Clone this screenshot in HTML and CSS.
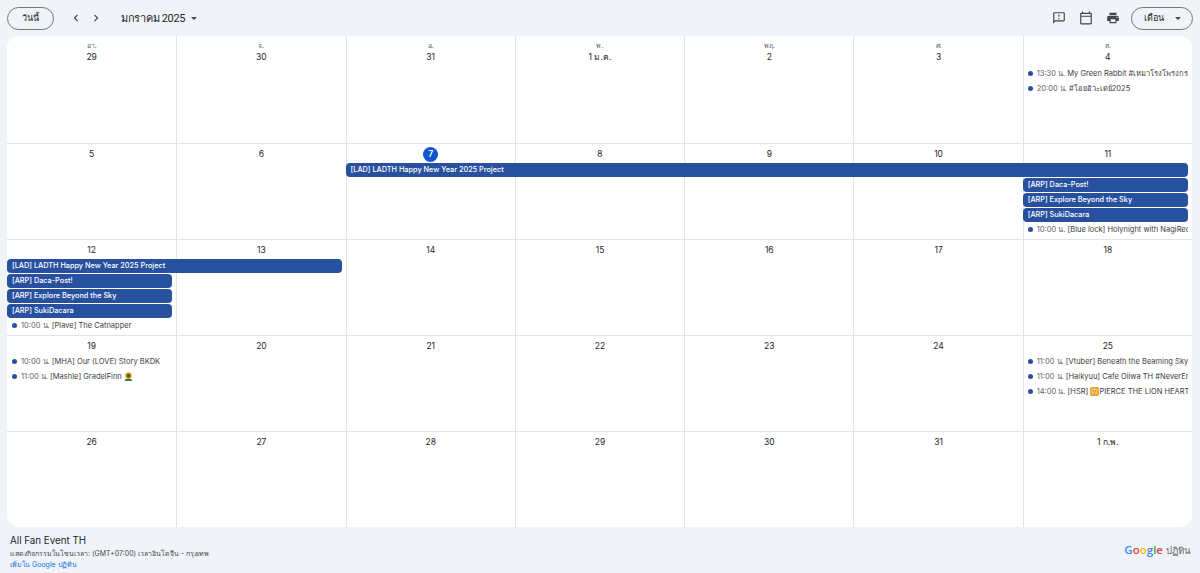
FILE: index.html
```html
<!DOCTYPE html>
<html lang="th">

<head>
    <meta charset="UTF-8">
    <meta name="viewport" content="width=device-width, initial-scale=1.0">
    <title>All Fan Event TH</title>
    <link rel="stylesheet" href="styles.css">
</head>

<body>
    <div class="toolbar">
        <button class="pill today">วันนี้</button>
        <div class="nav">
            <svg class="icon" viewBox="0 0 24 24"><path d="M15.41 7.41 14 6l-6 6 6 6 1.41-1.41L10.83 12z"/></svg>
            <svg class="icon" viewBox="0 0 24 24"><path d="M8.59 16.59 10 18l6-6-6-6-1.41 1.41L13.17 12z"/></svg>
        </div>
        <div class="title">มกราคม 2025</div>
        <span class="caret"></span>
        <div class="actions">
            <svg class="tool" viewBox="0 0 24 24"><path d="M20 2H4c-1.1 0-1.99.9-1.99 2L2 22l4-4h14c1.1 0 2-.9 2-2V4c0-1.1-.9-2-2-2zm0 14H5.17L4 17.17V4h16v12zm-9-4h2v2h-2zm0-6h2v4h-2z"/></svg>
            <svg class="tool" viewBox="0 0 24 24"><path d="M20 3h-1V1h-2v2H7V1H5v2H4c-1.1 0-2 .9-2 2v16c0 1.1.9 2 2 2h16c1.1 0 2-.9 2-2V5c0-1.1-.9-2-2-2zm0 18H4V10h16v11zm0-13H4V5h16v3z"/></svg>
            <svg class="tool" viewBox="0 0 24 24"><path d="M19 8H5c-1.66 0-3 1.34-3 3v6h4v4h12v-4h4v-6c0-1.66-1.34-3-3-3zm-3 11H8v-5h8v5zm3-7c-.55 0-1-.45-1-1s.45-1 1-1 1 .45 1 1-.45 1-1 1zm-1-9H6v4h12V3z"/></svg>
            <button class="pill month">เดือน<span class="caret"></span></button>
        </div>
    </div>

    <div class="calendar">
        <!-- week 1 -->
        <div class="week first">
            <div class="day"><small>อา.</small>29</div>
            <div class="day"><small>จ.</small>30</div>
            <div class="day"><small>อ.</small>31</div>
            <div class="day"><small>พ.</small>1 ม.ค.</div>
            <div class="day"><small>พฤ.</small>2</div>
            <div class="day"><small>ศ.</small>3</div>
            <div class="day"><small>ส.</small>4</div>
            <div class="timed c7 r1"><i></i><b>13:30 น.</b> My Green Rabbit #เหมาโรงโพรงกระต่าย</div>
            <div class="timed c7 r2"><i></i><b>20:00 น.</b> #โอยอิวะเดย์2025</div>
        </div>
        <!-- week 2 -->
        <div class="week">
            <div class="day">5</div>
            <div class="day">6</div>
            <div class="day"><span class="now">7</span></div>
            <div class="day">8</div>
            <div class="day">9</div>
            <div class="day">10</div>
            <div class="day">11</div>
            <div class="bar c3 to8 r1">[LAD] LADTH Happy New Year 2025 Project</div>
            <div class="bar c7 r2">[ARP] Daca-Post!</div>
            <div class="bar c7 r3">[ARP] Explore Beyond the Sky</div>
            <div class="bar c7 r4">[ARP] SukiDacara</div>
            <div class="timed c7 r5"><i></i><b>10:00 น.</b> [Blue lock] Holynight with NagiReo</div>
        </div>
        <!-- week 3 -->
        <div class="week">
            <div class="day">12</div>
            <div class="day">13</div>
            <div class="day">14</div>
            <div class="day">15</div>
            <div class="day">16</div>
            <div class="day">17</div>
            <div class="day">18</div>
            <div class="bar c1 to3 r1">[LAD] LADTH Happy New Year 2025 Project</div>
            <div class="bar c1 r2">[ARP] Daca-Post!</div>
            <div class="bar c1 r3">[ARP] Explore Beyond the Sky</div>
            <div class="bar c1 r4">[ARP] SukiDacara</div>
            <div class="timed c1 r5"><i></i><b>10:00 น.</b> [Plave] The Catnapper</div>
        </div>
        <!-- week 4 -->
        <div class="week">
            <div class="day">19</div>
            <div class="day">20</div>
            <div class="day">21</div>
            <div class="day">22</div>
            <div class="day">23</div>
            <div class="day">24</div>
            <div class="day">25</div>
            <div class="timed c1 r1"><i></i><b>10:00 น.</b> [MHA] Our (LOVE) Story BKDK</div>
            <div class="timed c1 r2"><i></i><b>11:00 น.</b> [Mashle] GradelFinn
                <svg class="emoji" viewBox="0 0 12 12"><path fill="#3f7d3a" d="M1 12c0-2 1-3 5-3s5 1 5 3z"/><circle cx="6" cy="5" r="4.2" fill="#c99a1e"/><circle cx="6" cy="5" r="2.2" fill="#6b4a1c"/></svg>
            </div>
            <div class="timed c7 r1"><i></i><b>11:00 น.</b> [Vtuber] Beneath the Beaming Sky</div>
            <div class="timed c7 r2"><i></i><b>11:00 น.</b> [Haikyuu] Cafe Oiiwa TH #NeverEnding</div>
            <div class="timed c7 r3"><i></i><b>14:00 น.</b> [HSR]
                <svg class="emoji" viewBox="0 0 12 12"><rect width="12" height="12" rx="2" fill="#f2a23a"/><circle cx="6" cy="6" r="4" fill="#f8d26a"/><path fill="#6b3c12" d="M3.6 4.6h1.3v1.3H3.6zm3.5 0h1.3v1.3H7.100zM5 7.700h2v1H5z"/></svg>PIERCE THE LION HEART
            </div>
        </div>
        <!-- week 5 -->
        <div class="week">
            <div class="day">26</div>
            <div class="day">27</div>
            <div class="day">28</div>
            <div class="day">29</div>
            <div class="day">30</div>
            <div class="day">31</div>
            <div class="day">1 ก.พ.</div>
        </div>
    </div>

    <div class="footer">
        <div>
            <div class="cal-name">All Fan Event TH</div>
            <div class="zone">แสดงกิจกรรมในโซนเวลา: (GMT+07:00) เวลาอินโดจีน - กรุงเทพ</div>
            <a class="add" href="#">เพิ่มใน Google ปฏิทิน</a>
        </div>
        <div class="brand">
            <span class="logo"><span class="g-blue">G</span><span class="g-red">o</span><span class="g-yellow">o</span><span class="g-blue">g</span><span class="g-green">l</span><span class="g-red">e</span></span>
            <span class="brand-text">ปฏิทิน</span>
        </div>
    </div>
</body>
</html>
```

FILE: styles.css
```css
* {
    box-sizing: border-box;
}

body {
    margin: 0;
    height: 573px;
    overflow: hidden;
    background-color: #f0f4f9;
    color: #1f1f1f;
    font-family: Inter, "Noto Sans", "Noto Sans CJK SC", sans-serif;
    display: flex;
    flex-direction: column;
    padding: 0 8px 0 7px;
}

/* top bar */
.toolbar {
    height: 36px;
    margin-right: -1px;
    display: flex;
    align-items: center;
    flex-shrink: 0;
}

.pill {
    height: 23px;
    border: 1px solid #747775;
    border-radius: 12px;
    background: transparent;
    color: #1f1f1f;
    font-family: inherit;
    font-size: 9px;
    font-weight: 500;
    padding: 0;
}

.today {
    width: 47px;
}

.nav {
    display: flex;
    gap: 6px;
    margin-left: 15px;
    margin-right: 18px;
}

.icon {
    width: 14px;
    height: 14px;
    fill: #444746;
}

.title {
    font-family: Roboto, "Noto Sans", sans-serif;
    font-size: 11px;
    letter-spacing: -0.3px;
    color: #1f1f1f;
}

.caret {
    display: inline-block;
    width: 0;
    height: 0;
    margin-left: 6px;
    border-left: 3px solid transparent;
    border-right: 3px solid transparent;
    border-top: 3px solid #444746;
}

.actions {
    margin-left: auto;
    display: flex;
    align-items: center;
    gap: 13px;
}

.tool {
    width: 14px;
    height: 14px;
    fill: #444746;
}

.month {
    width: 62px;
    margin-left: -2px;
}

.month .caret {
    margin-left: 11px;
    vertical-align: middle;
}

/* month grid */
.calendar {
    flex: 1;
    min-height: 0;
    background-color: #fff;
    border-radius: 12px;
    overflow: hidden;
    display: flex;
    flex-direction: column;
}

.week {
    height: 96px;
    display: grid;
    grid-template-columns: repeat(7, minmax(0, 1fr));
    grid-template-rows: 19px repeat(5, 15px) 1fr;
    border-top: 1px solid #e1e3e6;
    font-size: 7.5px;
}

.week.first {
    height: 107px;
    grid-template-rows: 31px repeat(5, 15px) 1fr;
    border-top: 0;
}

.day {
    grid-row: 1 / -1;
    border-left: 1px solid #e1e3e6;
    text-align: center;
    padding-top: 4px;
    font-size: 8.5px;
    line-height: 12px;
    font-weight: 400;
    color: #1f1f1f;
}

.day:nth-child(1) {
    border-left: 0;
}

.day:nth-child(1) { grid-column: 1; }
.day:nth-child(2) { grid-column: 2; }
.day:nth-child(3) { grid-column: 3; }
.day:nth-child(4) { grid-column: 4; }
.day:nth-child(5) { grid-column: 5; }
.day:nth-child(6) { grid-column: 6; }
.day:nth-child(7) { grid-column: 7; }

.day small {
    display: block;
    font-size: 7px;
    font-weight: 400;
    line-height: 11px;
    color: #5f6368;
}

.now {
    display: inline-block;
    width: 15px;
    height: 15px;
    margin-top: -2px;
    line-height: 15px;
    border-radius: 50%;
    background-color: #0b57d0;
    color: #fff;
    font-weight: 600;
}

.c1 { grid-column-start: 1; }
.c3 { grid-column-start: 3; }
.c7 { grid-column-start: 7; }
.to3 { grid-column-end: 3; }
.to8 { grid-column-end: 8; }
.r1 { grid-row: 2; }
.r2 { grid-row: 3; }
.r3 { grid-row: 4; }
.r4 { grid-row: 5; }
.r5 { grid-row: 6; }

.bar {
    height: 14px;
    margin: 0 4px 0 0;
    padding-left: 5px;
    font-size: 7.3px;
    line-height: 14px;
    border-radius: 4px;
    background-color: #27509f;
    color: #fff;
    font-weight: 500;
    white-space: nowrap;
    overflow: hidden;
}

.timed {
    height: 14px;
    min-width: 0;
    margin: 0 4px 0 5px;
    line-height: 14px;
    color: #3c4043;
    white-space: nowrap;
    overflow: hidden;
}

.timed i {
    display: inline-block;
    width: 5px;
    height: 5px;
    margin-right: 4px;
    border-radius: 50%;
    background-color: #27509f;
    vertical-align: 0;
}

.timed b {
    font-weight: 400;
    color: #5f6368;
}

.emoji {
    width: 9px;
    height: 9px;
    vertical-align: -2px;
}

/* footer */
.footer {
    height: 46px;
    flex-shrink: 0;
    display: flex;
    justify-content: space-between;
    padding: 7px 2px 0 3px;
}

.cal-name {
    font-size: 9.8px;
    line-height: 14px;
}

.zone {
    font-size: 7px;
    line-height: 11px;
    color: #444746;
}

.add {
    display: block;
    font-size: 7px;
    line-height: 11px;
    color: #1a6fd8;
    text-decoration: none;
}

.brand {
    display: flex;
    align-items: baseline;
    gap: 3px;
    padding-top: 8px;
}

.logo {
    font-family: "Open Sans", sans-serif;
    font-size: 11.5px;
    font-weight: 600;
}

.brand-text {
    font-size: 9.5px;
    color: #5f6368;
}

.g-blue { color: #4285f4; }
.g-red { color: #ea4335; }
.g-yellow { color: #fbbc05; }
.g-green { color: #34a853; }
```
